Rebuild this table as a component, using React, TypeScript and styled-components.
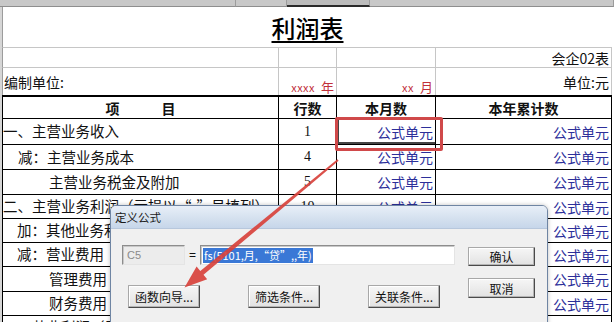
import styled, { createGlobalStyle } from 'styled-components';

const GlobalStyle = createGlobalStyle`
  html, body {
    margin: 0;
    padding: 0;
  }
  body {
    width: 614px;
    height: 322px;
    overflow: hidden;
    background: #d6d6d6;
    font-family: "Noto Sans CJK SC", "Liberation Sans", sans-serif;
  }
`;

type ItemRow = {
  name: string;
  indent: number;
  no: string;
  h: number;
};

const rows: ItemRow[] = [
  { name: '一、主营业务收入', indent: 0, no: '1', h: 26 },
  { name: '减：主营业务成本', indent: 15, no: '4', h: 25 },
  { name: '主营业务税金及附加', indent: 46, no: '5', h: 25 },
  { name: '二、主营业务利润（亏损以“-”号填列）', indent: 0, no: '10', h: 24 },
  { name: '加：其他业务利润', indent: 14, no: '11', h: 24 },
  { name: '减：营业费用', indent: 14, no: '14', h: 24 },
  { name: '管理费用', indent: 46, no: '15', h: 25 },
  { name: '财务费用', indent: 46, no: '16', h: 24 },
  { name: '三、营业利润（亏损以“-”号填列）', indent: 0, no: '18', h: 24 }
];

/** 利润表 + 定义公式 ダイアログ */
export default function App() {
  const template = ['41px', '20px', '27px', '24px', ...rows.map((r) => `${r.h}px`)].join(' ');

  return (
    <Page>
      <GlobalStyle />
      <Strip>
        <StripSeg />
        <StripSeg />
        <StripSeg $active />
        <StripSeg />
      </Strip>

      <Sheet $rows={template}>
        <TitleCell>
          <Title>利润表</Title>
        </TitleCell>

        <MetaCell $first />
        <MetaCell />
        <MetaCell />
        <MetaCell $align="flex-end">会企02表</MetaCell>

        <MetaCell $first $last>编制单位:</MetaCell>
        <MetaCell $last $align="flex-end" $bottom>
          <Red>
            <small>xxxx</small> 年
          </Red>
        </MetaCell>
        <MetaCell $last $align="flex-end" $bottom>
          <Red>
            <small>xx</small> 月
          </Red>
        </MetaCell>
        <MetaCell $last $align="flex-end">单位:元</MetaCell>

        <HeadCell $first>项　　　目</HeadCell>
        <HeadCell>行数</HeadCell>
        <HeadCell>本月数</HeadCell>
        <HeadCell>本年累计数</HeadCell>

        {rows.map((r, i) => (
          <Row key={r.no}>
            <ItemCell $first $indent={r.indent}>{r.name}</ItemCell>
            <NumCell>{r.no}</NumCell>
            <FormulaCell $selected={i === 0}>公式单元</FormulaCell>
            <FormulaCell>公式单元</FormulaCell>
          </Row>
        ))}
      </Sheet>

      <Highlight />

      <Dialog>
        <TitleBar>定义公式</TitleBar>
        <DialogBody>
          <LeftPane>
            <InputRow>
              <CellRef>C5</CellRef>
              <Equals>=</Equals>
              <FormulaInput>
                <Selected>fs(5101,月,“贷”,,年)</Selected>
              </FormulaInput>
            </InputRow>
            <ButtonRow>
              <WinButton>函数向导...</WinButton>
              <WinButton>筛选条件...</WinButton>
              <WinButton>关联条件...</WinButton>
            </ButtonRow>
          </LeftPane>
          <RightPane>
            <WinButton $h={19}>确认</WinButton>
            <WinButton $h={20}>取消</WinButton>
          </RightPane>
        </DialogBody>
      </Dialog>

      <Arrow viewBox="0 0 614 322" width="614" height="322">
        <polygon
          points="337.4,159.3 200.3,271.0 196.6,266.5 184.5,287.5 207.2,279.3 203.5,274.8 338.6,160.7"
          fill="#d8423c"
          fillOpacity="0.92"
        />
      </Arrow>
    </Page>
  );
}

const Page = styled.div`
  position: relative;
  width: 614px;
  height: 322px;
  overflow: hidden;
`;

const Strip = styled.div`
  display: grid;
  grid-template-columns: 236px 51px 83px 1fr;
  height: 7px;
`;

const StripSeg = styled.div<{ $active?: boolean }>`
  background: ${(p) => (p.$active ? '#bcbcbc' : '#c8c8c8')};
  border-right: 1px solid #9c9c9c;
  border-bottom: ${(p) => (p.$active ? '2px solid #2a2a2a' : '1px solid #8e8e8e')};
`;

const Sheet = styled.div<{ $rows: string }>`
  display: grid;
  grid-template-columns: 277px 58px 99px 176px;
  grid-template-rows: ${(p) => p.$rows};
  margin-left: 2px;
  background: #fff;
  font-size: 14px;
  color: #111;
`;

const Row = styled.div`
  display: contents;
`;

const BaseCell = styled.div<{ $first?: boolean; $align?: string }>`
  box-sizing: border-box;
  display: flex;
  align-items: center;
  justify-content: ${(p) => p.$align ?? 'flex-start'};
  white-space: nowrap;
  overflow: hidden;
  line-height: 1;
`;

const TitleCell = styled.div`
  grid-column: 1 / -1;
  display: flex;
  align-items: center;
  justify-content: center;
  border-left: 1px solid #9c9c9c;
  border-bottom: 1px solid #c6c6c6;
  padding-top: 1px;
`;

const Title = styled.span`
  font-size: 24px;
  font-weight: 500;
  text-decoration: underline;
  text-decoration-thickness: 1.5px;
  text-underline-offset: 3px;
  color: #000;
`;

const MetaCell = styled(BaseCell)<{ $last?: boolean; $bottom?: boolean }>`
  border-right: 1px solid #c6c6c6;
  border-bottom: ${(p) => (p.$last ? 'none' : '1px solid #c6c6c6')};
  border-left: ${(p) => (p.$first ? '1px solid #9c9c9c' : 'none')};
  align-items: ${(p) => (p.$bottom ? 'flex-end' : 'center')};
  padding: ${(p) => (p.$bottom ? '0 2px 2px 2px' : '0 2px 0 1px')};
`;

const Red = styled.span`
  color: #c2303a;
  font-size: 13px;
  small {
    font-size: 11px;
    letter-spacing: 0.5px;
    margin-right: 3px;
  }
`;

const HeadCell = styled(BaseCell)`
  justify-content: center;
  font-weight: bold;
  border-top: 2px solid #000;
  border-right: 1px solid #000;
  border-bottom: 1px solid #000;
  border-left: ${(p) => (p.$first ? '1px solid #000' : 'none')};
`;

const ItemCell = styled(BaseCell)<{ $indent: number }>`
  padding-left: ${(p) => p.$indent}px;
  font-size: 14.5px;
  border-right: 1px solid #000;
  border-bottom: 1px solid #000;
  border-left: 1px solid #000;
`;

const NumCell = styled(BaseCell)`
  justify-content: center;
  font-family: "Liberation Serif", serif;
  font-size: 14px;
  border-right: 1px solid #000;
  border-bottom: 1px solid #000;
`;

const FormulaCell = styled(BaseCell)<{ $selected?: boolean }>`
  justify-content: flex-end;
  padding-right: 2px;
  color: #2c2f9a;
  border-right: 1px solid #000;
  border-bottom: 1px solid #000;
  box-shadow: ${(p) => (p.$selected ? 'inset 2px 0 0 #444, inset 0 -2px 0 #444' : 'none')};
`;

const Highlight = styled.div`
  position: absolute;
  left: 335px;
  top: 117px;
  width: 108px;
  height: 34px;
  box-sizing: border-box;
  border: 3px solid #d0494a;
  border-radius: 2px;
`;

const Dialog = styled.div`
  position: absolute;
  left: 110px;
  top: 205px;
  width: 438px;
  height: 130px;
  box-sizing: border-box;
  border: 1px solid #6f85a3;
  border-radius: 6px 6px 0 0;
  background: #f0f0f0;
  box-shadow: 0 0 4px rgba(0, 0, 0, 0.25);
  font-size: 12px;
  color: #111;
`;

const TitleBar = styled.div`
  height: 22px;
  padding-left: 4px;
  display: flex;
  align-items: center;
  border-radius: 5px 5px 0 0;
  background: linear-gradient(#e8eff8, #d5e1ef 55%, #c6d6ea);
  border-bottom: 1px solid #b7c7dc;
  font-size: 11.5px;
  color: #1b1b1b;
`;

const DialogBody = styled.div`
  display: flex;
  align-items: flex-start;
  padding: 16px 0 0 11px;
`;

const LeftPane = styled.div`
  display: flex;
  flex-direction: column;
  flex: 0 0 334px;
  width: 334px;
`;

const InputRow = styled.div`
  display: flex;
  align-items: center;
  height: 20px;
`;

const sunken = `
  box-sizing: border-box;
  height: 20px;
  border: 1px solid;
  border-color: #8d8d8d #e4e4e4 #e4e4e4 #8d8d8d;
  box-shadow: inset 1px 1px 0 #c8c8c8;
  display: flex;
  align-items: center;
  flex: none;
`;

const CellRef = styled.div`
  ${sunken}
  width: 63px;
  background: #ececec;
  color: #8a8a8a;
  font-family: "Liberation Sans", sans-serif;
  font-size: 11px;
  padding-left: 4px;
`;

const Equals = styled.span`
  flex: none;
  width: 15px;
  text-align: center;
  font-family: "Liberation Sans", sans-serif;
  font-size: 12px;
`;

const FormulaInput = styled.div`
  ${sunken}
  width: 255px;
  background: #fff;
  padding-left: 2px;
  overflow: hidden;
`;

const Selected = styled.span`
  background: #3a78d6;
  color: #fff;
  font-size: 11px;
  line-height: 15px;
  padding: 0 1px;
  white-space: nowrap;
`;

const ButtonRow = styled.div`
  display: grid;
  grid-template-columns: repeat(3, 72px);
  justify-content: space-between;
  padding: 0 16px 0 6px;
  margin-top: 20px;
`;

const RightPane = styled.div`
  display: flex;
  flex-direction: column;
  flex: 0 0 67px;
  width: 67px;
  margin-left: 12px;
  gap: 12px;
  padding-top: 2px;
`;

const WinButton = styled.button<{ $h?: number }>`
  box-sizing: border-box;
  height: ${(p) => p.$h ?? 23}px;
  padding: 0;
  margin: 0;
  font-family: "Noto Sans CJK SC", sans-serif;
  font-size: 12px;
  color: #111;
  background: linear-gradient(#f6f6f6, #e2e2e2);
  border: 1px solid;
  border-color: #a8a8a8 #4a4a4a #4a4a4a #a8a8a8;
  border-radius: 1px;
  box-shadow: inset -1px -1px 0 #b4b4b4, inset 1px 1px 0 #fff;
  white-space: nowrap;
`;

const Arrow = styled.svg`
  position: absolute;
  left: 0;
  top: 0;
  pointer-events: none;
`;
